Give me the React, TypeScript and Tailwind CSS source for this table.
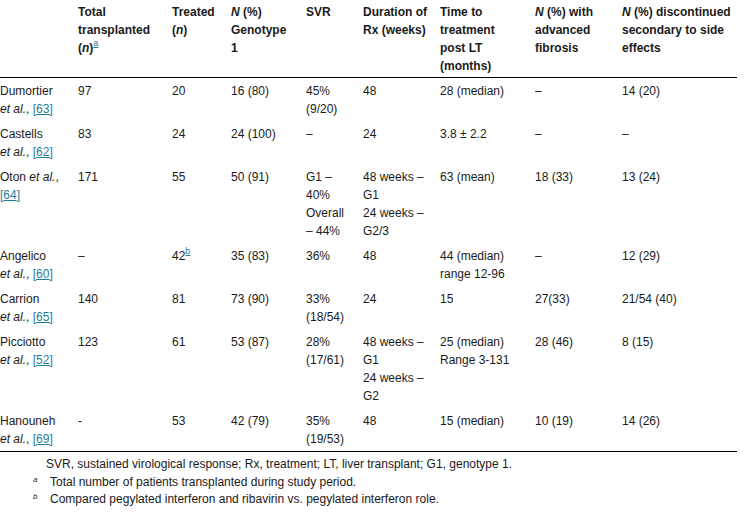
import React from "react"

const link = "text-[#1f7d9b] underline"

// column widths (incl. right padding) measured from the reference
const cols = [
  { w: "w-[78px]", pr: "pr-[12px]" },
  { w: "w-[94px]", pr: "pr-[12px]" },
  { w: "w-[59px]", pr: "pr-[12px]" },
  { w: "w-[75px]", pr: "pr-[14px]" },
  { w: "w-[57px]", pr: "pr-[12px]" },
  { w: "w-[77px]", pr: "pr-[10px]" },
  { w: "w-[95px]", pr: "pr-[16px]" },
  { w: "w-[87px]", pr: "pr-[12px]" },
  { w: "w-[115px]", pr: "pr-0" },
]

function Study({ name, n }: { name: string; n: number }) {
  return (
    <>
      {name} <i>et&nbsp;al.</i>,{" "}
      <a href="#" className={link}>
        [{n}]
      </a>
    </>
  )
}

function Lines({ items }: { items: string[] }) {
  return (
    <>
      {items.map((t) => (
        <div key={t}>{t}</div>
      ))}
    </>
  )
}

const header: React.ReactNode[] = [
  "",
  <>
    Total transplanted (<i>n</i>)
    <sup className={`${link} text-[9px] font-normal -top-[6px]`}>a</sup>
  </>,
  <>
    Treated (<i>n</i>)
  </>,
  <>
    <i>N</i> (%) Genotype 1
  </>,
  "SVR",
  "Duration of Rx (weeks)",
  "Time to treatment post LT (months)",
  <>
    <i>N</i> (%) with advanced fibrosis
  </>,
  <>
    <i>N</i> (%) discontinued secondary to side effects
  </>,
]

const rows: React.ReactNode[][] = [
  [<Study name="Dumortier" n={63} />, "97", "20", "16 (80)", "45% (9/20)", "48", "28 (median)", "–", "14 (20)"],
  [<Study name="Castells" n={62} />, "83", "24", "24 (100)", "–", "24", "3.8 ± 2.2", "–", "–"],
  [
    <Study name="Oton" n={64} />,
    "171",
    "55",
    "50 (91)",
    <Lines items={["G1 – 40%", "Overall – 44%"]} />,
    <Lines items={["48 weeks – G1", "24 weeks – G2/3"]} />,
    "63 (mean)",
    "18 (33)",
    "13 (24)",
  ],
  [
    <Study name="Angelico" n={60} />,
    "–",
    <>
      42<sup className={`${link} text-[9px] -top-[6px]`}>b</sup>
    </>,
    "35 (83)",
    "36%",
    "48",
    <Lines items={["44 (median)", "range 12-96"]} />,
    "–",
    "12 (29)",
  ],
  [<Study name="Carrion" n={65} />, "140", "81", "73 (90)", "33% (18/54)", "24", "15", "27(33)", "21/54 (40)"],
  [
    <Study name="Picciotto" n={52} />,
    "123",
    "61",
    "53 (87)",
    "28% (17/61)",
    <Lines items={["48 weeks – G1", "24 weeks – G2"]} />,
    <Lines items={["25 (median)", "Range 3-131"]} />,
    "28 (46)",
    "8 (15)",
  ],
  [<Study name="Hanouneh" n={69} />, "-", "53", "42 (79)", "35% (19/53)", "48", "15 (median)", "10 (19)", "14 (26)"],
]

export default function App() {
  return (
    <div className="w-[746px] h-[512px] overflow-hidden bg-white text-[#1a1a1a] text-[12px] font-[family-name:Liberation_Sans,Arial,sans-serif]">
      <table className="table-fixed w-[737px] border-collapse leading-[18px]">
        <colgroup>
          {cols.map((c, i) => (
            <col key={i} className={c.w} />
          ))}
        </colgroup>
        <thead>
          <tr>
            {header.map((h, i) => (
              <th
                key={i}
                className={`${cols[i].pr} pt-[3px] pb-[2px] text-left align-top font-bold border-b border-black`}
              >
                {h}
              </th>
            ))}
          </tr>
        </thead>
        <tbody>
          {rows.map((r, ri) => (
            <tr key={ri} className={ri === rows.length - 1 ? "border-b border-black" : ""}>
              {r.map((c, i) => (
                <td key={i} className={`${cols[i].pr} pt-[4px] pb-[3px] text-left align-top`}>
                  {c}
                </td>
              ))}
            </tr>
          ))}
        </tbody>
      </table>

      <div className="mt-[4px] leading-[17.6px]">
        <p className="pl-[46px]">
          SVR, sustained virological response; Rx, treatment; LT, liver transplant; G1, genotype 1.
        </p>
        <div className="flex pl-[33px]">
          <span className="w-[17px] shrink-0 italic text-[8px] leading-[17.6px] relative -top-[3px]">a</span>
          <p>Total number of patients transplanted during study period.</p>
        </div>
        <div className="flex pl-[33px]">
          <span className="w-[17px] shrink-0 italic text-[8px] leading-[17.6px] relative -top-[3px]">b</span>
          <p>Compared pegylated interferon and ribavirin vs. pegylated interferon role.</p>
        </div>
      </div>
    </div>
  )
}
